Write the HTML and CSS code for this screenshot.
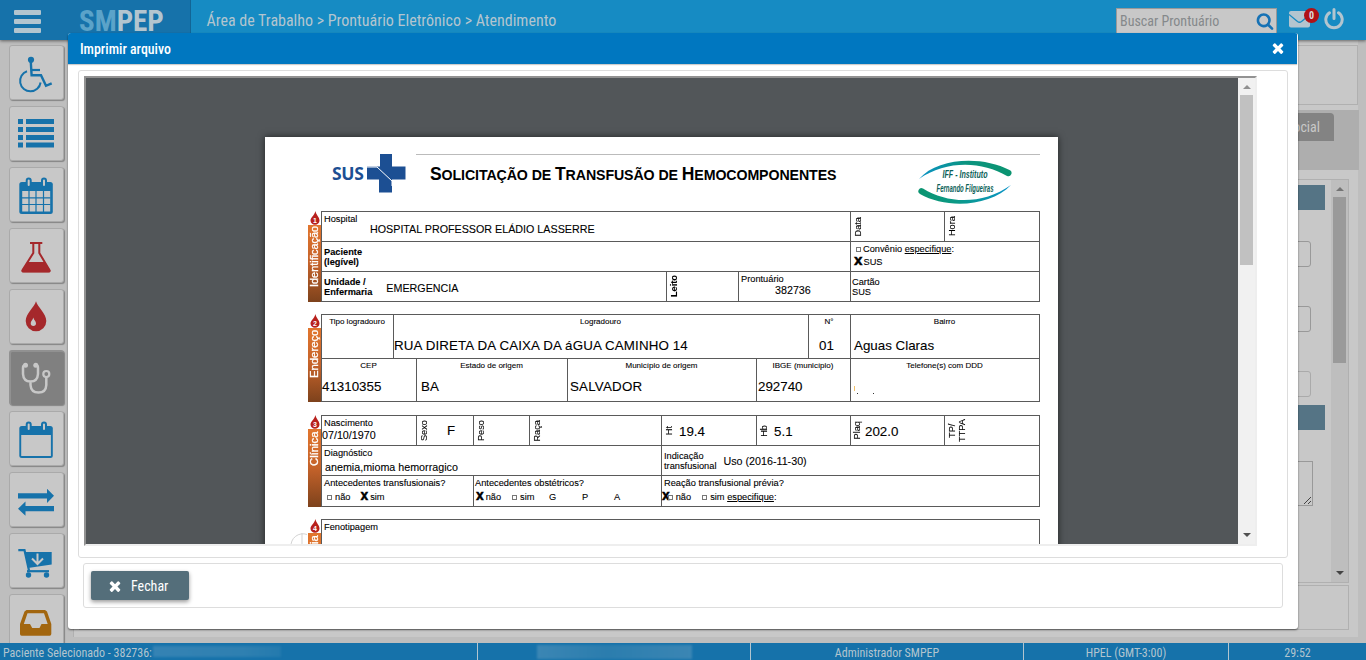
FILE: index.html
```html
<!DOCTYPE html>
<html lang="pt-BR">
<head>
<meta charset="utf-8">
<title>SMPEP - Atendimento</title>
<link rel="stylesheet" href="styles.css">
</head>
<body>
<header class="topbar">
  <div class="brand">
    <div class="burger"><i></i><i></i><i></i></div>
    <div class="logo"><span>SM</span>PEP</div>
  </div>
  <div class="crumbs">Área de Trabalho &gt; Prontuário Eletrônico &gt; Atendimento</div>
  <div class="tools">
    <div class="search"><span>Buscar Prontuário</span>
      <svg width="18" height="18" viewBox="0 0 1792 1792"><path fill="#1672b5" d="M1216 832q0-185-131.500-316.500t-316.500-131.500-316.500 131.500-131.500 316.500 131.500 316.500 316.500 131.500 316.500-131.500 131.500-316.500zm512 832q0 52-38 90t-90 38q-54 0-90-38l-343-342q-179 124-399 124-143 0-273.500-55.500t-225-150-150-225-55.500-273.500 55.500-273.500 150-225 225-150 273.500-55.500 273.500 55.500 225 150 150 225 55.500 273.500q0 220-124 399l343 343q37 37 37 90z"/></svg>
    </div>
    <div class="mail">
      <svg width="22" height="18" viewBox="0 0 22 18"><rect y="1" width="21" height="16.500" rx="2" fill="#b3c5cf"/><path d="M0 4.500L8.500 11.500Q10.500 13 12.500 11.500L21 4.500" fill="none" stroke="#168bc3" stroke-width="1.300"/></svg>
      <b>0</b>
    </div>
    <svg class="power" width="20" height="22" viewBox="0 0 20 22"><path d="M5.500 4.800A8.200 8.200 0 1 0 14.500 4.800M10 1.500V10.500" fill="none" stroke="#b3c5cf" stroke-width="3" stroke-linecap="round"/></svg>
  </div>
</header>

<main class="workspace">
  <nav class="side">
    <div class="tile"><svg viewBox="0 0 54 54"><circle cx="21" cy="14.800" r="3.100" fill="#1672aa"/><g fill="none" stroke="#1672aa"><path d="M20.800 17L21.600 30.200H31L36 40.800 41.700 38.300" stroke-width="2.400"/><path d="M21 25H30" stroke-width="2.200"/><path d="M17 26.300A10.300 10.300 0 1 0 30.600 37.500" stroke-width="2"/></g></svg></div>
    <div class="tile"><svg viewBox="0 0 54 54" fill="#1672aa"><path d="M8 13h5v5H8zM16 13h28v5H16zM8 21h5v5H8zM16 21h28v5H16zM8 29h5v5H8zM16 29h28v5H16zM8 36.500h5v5H8zM16 36.500h28v5H16z"/></svg></div>
    <div class="tile"><svg viewBox="0 0 54 54"><rect x="9.300" y="15" width="33.500" height="32" rx="2.500" fill="#1672aa"/><path d="M12.200 24h28v20.500h-28z" fill="#c8c8c8"/><path d="M19 24v21M26 24v21M33.500 24v21M12 30.800h28.500M12 37.500h28.500" stroke="#1672aa" stroke-width="1.200"/><g fill="#c8c8c8" stroke="#1672aa" stroke-width="2"><rect x="16.700" y="11.500" width="4" height="8.500" rx="2"/><rect x="32" y="11.500" width="4" height="8.500" rx="2"/></g></svg></div>
    <div class="tile"><svg viewBox="0 0 54 54"><path d="M20 15H32.300M23.300 15V25L12.600 42Q12 43.500 13.500 43.500H38.500Q40 43.500 39.400 42L29.300 25V15" fill="none" stroke="#a5282b" stroke-width="2"/><path d="M18 34H34.500L40.500 42.500Q40.800 44.300 38.500 44.300H13.500Q11.300 44.300 11.500 42.500Z" fill="#a5282b"/></svg></div>
    <div class="tile"><svg viewBox="0 0 54 54"><path d="M26 12.300C27.500 18 36.300 24.500 36.300 32A10.300 10.300 0 0 1 15.700 32C15.700 24.500 24.500 18 26 12.300Z" fill="#a5282b"/><path d="M23.300 28.500C23.800 31 26 32 26 34.300A2.600 2.600 0 0 1 20.700 34.300C20.700 32 22.800 31 23.300 28.500Z" fill="#c8c8c8"/></svg></div>
    <div class="tile active"><svg viewBox="0 0 54 54"><g fill="none" stroke="#c8c8c8" stroke-width="2.500"><path d="M15 15.500Q13 15 13 18V24Q13.500 31.500 20.500 31.500T28 24V18Q28 15 26 15.500M20.500 31.500V35Q21 42.500 28.500 42.500T36.300 35V27"/><circle cx="36.300" cy="24" r="3" stroke-width="2.200"/></g><g fill="#c8c8c8"><circle cx="15.500" cy="15.300" r="2.500"/><circle cx="25.800" cy="15.300" r="2.500"/></g></svg></div>
    <div class="tile"><svg viewBox="0 0 54 54"><rect x="9.300" y="15" width="33.500" height="32" rx="2.500" fill="#1672aa"/><path d="M11.200 24h29.700v21h-29.700z" fill="#c8c8c8"/><g fill="#c8c8c8" stroke="#1672aa" stroke-width="2"><rect x="16.700" y="11.500" width="4" height="8.500" rx="2"/><rect x="32" y="11.500" width="4" height="8.500" rx="2"/></g></svg></div>
    <div class="tile"><svg viewBox="0 0 54 54" fill="#1672aa"><path d="M8 21.300H37V16.800L44 23.800 37 31V26.500H8zM44 34.100H15.500V29.600L8 36.700 15.500 43.800V39.300H44z"/></svg></div>
    <div class="tile"><svg viewBox="0 0 54 54"><path d="M8.300 17.200H14.500L19 37.500" fill="none" stroke="#1672aa" stroke-width="2.200"/><path d="M15.500 19H41.700V31.500L18 35Z" fill="#1672aa"/><path d="M17 38.200H39" stroke="#1672aa" stroke-width="2.200"/><circle cx="18.500" cy="42" r="2.700" fill="#1672aa"/><circle cx="36.500" cy="42" r="2.700" fill="#1672aa"/><path d="M27.500 20.500V30M22 25.500L27.500 31 33 25.500" fill="none" stroke="#c8c8c8" stroke-width="2"/></svg></div>
    <div class="tile"><svg viewBox="0 0 54 54"><path fill-rule="evenodd" fill="#a2660f" d="M16.500 16H35L37 17.500 41.300 30V40Q41.300 41.700 39.600 41.700H11.700Q10 41.700 10 40V30L14.500 17.500ZM17.500 19.300L13.800 30H20L22.200 34H29.500L31.500 30H37.700L34 19.300Z"/></svg></div>
  </nav>
  <section class="record">
    <div class="patient"></div>
    <div class="tabs"><div class="tab">Social</div></div>
    <div class="formarea">
      <div class="fields">
        <div class="band"></div>
        <div class="field f1"></div>
        <div class="field f2"></div>
        <div class="field f3"></div>
        <div class="band b2"></div>
        <div class="area"><svg width="10" height="10" viewBox="0 0 10 10"><path d="M2 9L9 2M6 9L9 6" stroke="#444" stroke-width="1"/></svg></div>
      </div>
      <div class="scroll dim"><i class="up"></i><div class="thumb"></div><i class="down"></i></div>
    </div>
    <div class="actions"></div>
  </section>
</main>

<footer class="status">
  <div class="s1">Paciente Selecionado - 382736:<i class="smudge"></i></div>
  <div class="s2"><i class="smudge"></i></div>
  <div class="s3">Administrador SMPEP</div>
  <div class="s4">HPEL (GMT-3:00)</div>
  <div class="s5">29:52</div>
</footer>

<div class="modal">
  <div class="modal-head"><span>Imprimir arquivo</span>
    <svg width="16" height="16" viewBox="0 0 1792 1792"><path fill="#fff" d="M1490 1322q0 40-28 68l-136 136q-28 28-68 28t-68-28l-294-294-294 294q-28 28-68 28t-68-28l-136-136q-28-28-28-68t28-68l294-294-294-294q-28-28-28-68t28-68l136-136q28-28 68-28t68 28l294 294 294-294q28-28 68-28t68 28l136 136q28 28 28 68t-28 68l-294 294 294 294q28 28 28 68z"/></svg>
  </div>
  <div class="modal-body">
    <div class="viewer">
      <div class="canvas">
        <article class="sheet">
          <div class="sheet-head">
            <div class="sus"><span>SUS</span>
              <svg width="39" height="39" viewBox="0 0 39 39"><path fill="#1c4f93" d="M13 0H25V12.500H38.500V25.500H25V38.500H12V25.500H0V12.500H13Z"/><path d="M0 13H10L25 27V32" fill="none" stroke="#fff" stroke-width="1"/></svg>
            </div>
            <h1><b>S</b>olicitação de <b>T</b>ransfusão de <b>H</b>emocomponentes</h1>
            <svg class="iff" width="94" height="44" viewBox="0 0 94 44">
              <defs><linearGradient id="a"><stop offset="0" stop-color="#0a93c8"/><stop offset=".5" stop-color="#0b9480"/><stop offset="1" stop-color="#0b9470"/></linearGradient><linearGradient id="b"><stop offset="0" stop-color="#0b9470"/><stop offset=".4" stop-color="#0b9a86"/><stop offset="1" stop-color="#0a93c8"/></linearGradient></defs>
              <path fill="url(#a)" d="M1 19C20-3 65-4 91.500 10A3 3 0 0 1 89 16C64 1 28 0 1 19Z"/>
              <path fill="url(#b)" d="M93 25C72 47 28 49 2 34A3 3 0 0 1 5 28.500C30 44 65 45 93 25Z"/>
              <g class="script" fill="#0b5f58" text-anchor="middle"><text x="47" y="18" textLength="45" lengthAdjust="spacingAndGlyphs">IFF - Instituto</text><text x="47" y="32" textLength="57" lengthAdjust="spacingAndGlyphs">Fernando Filgueiras</text></g>
            </svg>
          </div>

          <div class="block">
            <div class="strip"><svg viewBox="0 0 10 14"><path d="M5.500 0C6 4 9.500 6 9.500 9.500A4.500 4.300 0 0 1 .5 9.500C.5 6.500 4 5 5.500 0Z" fill="#b8201c"/><text x="5" y="11.800">1</text></svg><span>Identificação</span></div>
            <div class="grid">
              <div class="row r30 g1">
                <div class="cell"><label>Hospital</label><p class="v hosp">HOSPITAL PROFESSOR ELÁDIO LASSERRE</p></div>
                <div class="cell rot"><label>Data</label></div>
                <div class="cell rot"><label>Hora</label></div>
              </div>
              <div class="row r30 g2">
                <div class="cell bold"><label>Paciente<br>(legível)</label></div>
                <div class="cell conv"><label><i class="box"></i>Convênio <u>especifique</u>:</label><label><b class="x big">X</b>SUS</label></div>
              </div>
              <div class="row r30 g3">
                <div class="cell bold line"><label>Unidade /<br>Enfermaria</label><p class="v">EMERGENCIA</p></div>
                <div class="cell rot bold"><label>Leito</label></div>
                <div class="cell"><label>Prontuário</label><p class="v pront">382736</p></div>
                <div class="cell card"><label>Cartão<br>SUS</label></div>
              </div>
            </div>
          </div>

          <div class="block two">
            <div class="strip"><svg viewBox="0 0 10 14"><path d="M5.500 0C6 4 9.500 6 9.500 9.500A4.500 4.300 0 0 1 .5 9.500C.5 6.500 4 5 5.500 0Z" fill="#b8201c"/><text x="5" y="11.800">2</text></svg><span>Endereço</span></div>
            <div class="grid">
              <div class="row r44 g4 mid">
                <div class="cell"><label>Tipo logradouro</label></div>
                <div class="cell"><label>Logradouro</label><p class="w p0">RUA DIRETA DA CAIXA DA áGUA CAMINHO 14</p></div>
                <div class="cell"><label>N°</label><p class="w p11">01</p></div>
                <div class="cell"><label>Bairro</label><p class="w p3">Aguas Claras</p></div>
              </div>
              <div class="row r43 g5 mid">
                <div class="cell"><label>CEP</label><p class="w pn">41310355</p></div>
                <div class="cell"><label>Estado de origem</label><p class="w p4">BA</p></div>
                <div class="cell"><label>Município de origem</label><p class="w p2">SALVADOR</p></div>
                <div class="cell"><label>IBGE (município)</label><p class="w p1">292740</p></div>
                <div class="cell"><label>Telefone(s) com DDD</label><div class="specks"><i></i><i></i><i></i></div></div>
              </div>
            </div>
          </div>

          <div class="block three">
            <div class="strip"><svg viewBox="0 0 10 14"><path d="M5.500 0C6 4 9.500 6 9.500 9.500A4.500 4.300 0 0 1 .5 9.500C.5 6.500 4 5 5.500 0Z" fill="#b8201c"/><text x="5" y="11.800">3</text></svg><span>Clínica</span></div>
            <div class="grid">
              <div class="row r30 g6">
                <div class="cell"><label>Nascimento</label><p class="v born">07/10/1970</p></div>
                <div class="cell rot"><label>Sexo</label><p class="w sex">F</p></div>
                <div class="cell rot"><label>Peso</label></div>
                <div class="cell rot"><label>Raça</label></div>
                <div class="cell rot"><label>Ht</label><p class="w">19.4</p></div>
                <div class="cell rot"><label>Hb</label><p class="w">5.1</p></div>
                <div class="cell rot plaq"><label>Plaq</label><p class="w">202.0</p></div>
                <div class="cell rot tp"><label>TP/<br>TTPA</label></div>
              </div>
              <div class="row r30 g7">
                <div class="cell"><label>Diagnóstico</label><p class="v diag">anemia,mioma hemorragico</p></div>
                <div class="cell ind"><label>Indicação<br>transfusional</label><p class="v">Uso (2016-11-30)</p></div>
              </div>
              <div class="row r31 g8">
                <div class="cell"><label>Antecedentes transfusionais?</label><div class="opts o1"><span><i class="box"></i>não</span><span><b class="x">X</b>sim</span></div></div>
                <div class="cell"><label>Antecedentes obstétricos?</label><div class="opts o2"><span><b class="x">X</b>não</span><span><i class="box"></i>sim</span><span>G</span><span>P</span><span>A</span></div></div>
                <div class="cell"><label>Reação transfusional prévia?</label><div class="opts o3"><span><b class="x">X</b><i class="box"></i>não</span><span><i class="box"></i>sim <u>especifique</u>:</span></div></div>
              </div>
            </div>
          </div>

          <div class="block four">
            <svg class="mark" width="17" height="30" viewBox="0 0 17 30"><path d="M17 1.500A12 12 0 0 0 1 14M12 0V14M0 12H17" fill="none" stroke="#d3d3d3"/></svg>
            <div class="strip"><svg viewBox="0 0 10 14"><path d="M5.500 0C6 4 9.500 6 9.500 9.500A4.500 4.300 0 0 1 .5 9.500C.5 6.500 4 5 5.500 0Z" fill="#b8201c"/><text x="5" y="11.800">4</text></svg><span>Hemoterapia</span></div>
            <div class="grid"><div class="row g9"><div class="cell"><label>Fenotipagem</label></div></div></div>
          </div>
        </article>
      </div>
      <div class="scroll"><i class="up"></i><div class="thumb"></div><i class="down"></i></div>
    </div>
  </div>
  <div class="modal-foot">
    <button class="close"><svg width="16" height="16" viewBox="0 0 1792 1792"><path fill="#fff" d="M1490 1322q0 40-28 68l-136 136q-28 28-68 28t-68-28l-294-294-294 294q-28 28-68 28t-68-28l-136-136q-28-28-28-68t28-68l294-294-294-294q-28-28-28-68t28-68l136-136q28-28 68-28t68 28l294 294 294-294q28-28 68-28t68 28l136 136q28 28 28 68t-28 68l-294 294 294 294q28 28 28 68z"/></svg><span>Fechar</span></button>
  </div>
</div>
</body>
</html>
```
FILE: styles.css
```css
* { box-sizing: border-box; }
body { margin: 0; width: 1366px; height: 660px; overflow: hidden; position: relative; display: flex; flex-direction: column; background: #bebebe; font-family: "Roboto Condensed", Roboto, sans-serif; font-stretch: 75%; }
p, h1 { margin: 0; }
svg { display: block; flex: none; }

.topbar { height: 40px; flex: none; display: flex; background: #168bc3; box-shadow: 0 1px 3px rgba(0,0,0,.5); color: #b3c5cf; z-index: 1; }
.brand { width: 191px; display: flex; background: #1672aa; border-right: 1px solid #126595; }
.burger { width: 27px; margin: 10px 39px 0 14px; display: flex; flex-direction: column; gap: 4px; }
.burger i { height: 5px; border-radius: 1px; background: #b3c5cf; }
.logo { font-size: 29px; line-height: 43px; font-weight: 700; margin-left: -1px; }
.logo span { color: #5ba3c9; }
.crumbs { margin-left: 15.5px; flex: 1; font-size: 16px; line-height: 41px; }
.tools { display: flex; padding-top: 8px; width: 250px; }
.search { width: 161px; height: 27px; display: flex; justify-content: space-between; padding: 3px 2px 0 3px; background: #c8c8c8; border: 1px solid #999; color: #85898b; font-size: 14px; line-height: 18px; }
.mail { position: relative; margin: 2px 0 0 12px; width: 32px; }
.mail b { position: absolute; left: 15px; top: -2px; width: 15px; height: 15px; border-radius: 50%; background: #b01116; color: #ddd; font-size: 10px; line-height: 15px; text-align: center; }
.power { margin-left: 3px; }

.workspace { flex: 1; min-height: 0; display: flex; }
.side { width: 73px; padding: 5px 0 0 9px; display: flex; flex-direction: column; gap: 6px; overflow: hidden; }
.tile { width: 55px; height: 55px; flex: none; border: 1px solid #aaa; border-radius: 3px; background: #c8c8c8; box-shadow: 1px 1px 1px rgba(0,0,0,.3); }
.tile svg { width: 54px; height: 54px; margin: -1px 0 0; }
.tile.active { background: #808080; border: 2px solid #919191; border-width: 2px 0 0 2px; }
.tile.active svg { margin: -2px 0 0 -1px; }

.record { width: 1285px; height: 597px; background: #c8c8c8; border-left: 1px solid #b0b0b0; }
.patient { margin-top: 5px; height: 60px; border: 1px solid #b0b0b0; }
.tabs { margin-top: 5px; margin-right: -1px; height: 60px; background: #aeaeae; padding: 3px 25px 0 0; display: flex; justify-content: flex-end; }
.tab { width: 60px; height: 28px; border-radius: 0 4px 0 0; background: #838383; color: #c8c8c8; font-size: 14px; line-height: 28px; text-align: right; padding-right: 14px; }
.formarea { margin: 9px 9px 0 5px; height: 404px; border: 1px solid #b0b0b0; display: flex; justify-content: flex-end; }
.fields { width: 1235px; display: flex; flex-direction: column; padding-top: 5px; }
.band { height: 25px; width: 1229px; background: #557485; flex: none; }
.field { width: 1215px; height: 26px; border: 1px solid #999; border-radius: 3px; margin-top: 39px; flex: none; }
.field.f1 { margin-top: 31px; }
.field.f3 { border-color: #aaa; }
.b2 { margin-top: 8px; }
.area { width: 1217px; height: 45px; margin-top: 31px; border: 1px solid #999; display: flex; justify-content: flex-end; align-items: flex-end; }
.actions { height: 45px; margin: 2px 9px 0 5px; border: 1px solid #b0b0b0; }

.scroll { width: 17px; flex: none; background: #f1f1f1; display: flex; flex-direction: column; align-items: center; padding: 7px 0; }
.scroll .up { border: 4px solid transparent; border-top: 0; border-bottom-color: #909090; }
.scroll .thumb { width: 13px; height: 170px; background: #c1c1c1; margin: 6px 0 auto; }
.scroll .down { border: 4px solid transparent; border-bottom: 0; border-top-color: #505050; }
.scroll.dim { background: #bebebe; padding-bottom: 7px; }
.dim .up { border-bottom-color: #747474; }
.dim .thumb { background: #9a9a9a; height: 166px; }
.dim .down { border-top-color: #444; }

.status { height: 17px; flex: none; z-index: 1; display: flex; background: #1672aa; color: #b3c5cf; font-size: 12px; line-height: 20px; text-align: center; }
.status div { border-left: 1px solid #b3c5cf; height: 17px; display: flex; justify-content: center; }
.status .s1 { width: 477px; border: 0; justify-content: flex-start; padding-left: 3px; }
.s2 { width: 273px; } .s3 { width: 273px; } .s4 { width: 205px; } .s5 { width: 138px; }
.smudge { width: 128px; height: 11px; margin: 3px 0 0 1px; background: linear-gradient(90deg, #3583b4, #2f80b1 70%, #247aae); filter: blur(1px); }
.s2 .smudge { width: 155px; margin-top: 2px; height: 14px; background: linear-gradient(90deg, #3b86b4, #2b7dae 45%, #3b86b4); }

.modal { position: absolute; z-index: 3; left: 68px; top: 33px; width: 1230px; height: 596px; background: #fff; border-radius: 3px; box-shadow: 0 1px 2px rgba(0,0,0,.55); overflow: hidden; }
.modal-head { height: 31px; width: 1229px; background: #0077c0; display: flex; justify-content: space-between; align-items: center; color: #fff; font-size: 13.9px; font-weight: 500; padding: 0 11px 0 12px; box-shadow: 0 1px 1px #ccc; }
.modal-head svg { margin-top: -2px; }
.modal-body { margin: 6px 0 0 10px; width: 1210px; height: 488px; border: 1px solid #ddd; border-radius: 3px; padding: 5px; }
.viewer { width: 1173px; height: 470px; border: 2px solid; border-color: #929292 #eee #eee #929292; display: flex; }
.canvas { flex: 1; height: 466px; background: #525659; overflow: hidden; }
.modal-foot { margin: 5px 0 0 15px; width: 1200px; height: 45px; border: 1px solid #ddd; border-radius: 3px; padding: 7px; }
.close { width: 98px; height: 29px; border: 0; border-radius: 2px; background: #546e7a; box-shadow: 0 2px 4px rgba(0,0,0,.4); color: #fff; font: inherit; font-size: 14px; display: flex; align-items: center; padding: 0 0 0 16px; gap: 8px; }

.sheet { margin: 59px 0 0 179px; width: 793px; height: 900px; background: #fff; box-shadow: 0 0 7px rgba(0,0,0,.6); font-family: "Liberation Sans", Arial, sans-serif; font-stretch: normal; color: #000; padding: 16px 0 0 43px; }
.sheet-head { height: 58px; display: flex; position: relative; }
.sheet-head::before { content: ""; position: absolute; left: 108px; top: 1px; width: 624px; height: 1px; background: #bbb; }
.sus { display: flex; width: 122px; padding: 1px 0 0 24px; color: #1c4f93; }
.sus span { width: 34.5px; font: 700 17.5px/39px "Open Sans", "Noto Sans", sans-serif; letter-spacing: -.3px; }
h1 { width: 488px; font-size: 14.200px; line-height: 42px; letter-spacing: -.1px; text-transform: uppercase; white-space: nowrap; }
h1 b { font-size: 17.500px; }
.iff { margin-top: 7px; }
.script { font: italic bold 10px "Liberation Sans", sans-serif; }

.block { display: flex; height: 91px; position: relative; }
.block.two { margin-top: 12px; height: 88px; }
.block.three { margin-top: 13px; height: 92px; }
.block.four { margin-top: 12px; height: 140px; }
.mark { position: absolute; left: -18px; top: 14px; }
.strip { width: 13px; display: flex; flex-direction: column; align-items: center; }
.strip svg { width: 10px; height: 14px; margin-left: 1px; }
.strip text { font-size: 7px; font-weight: 700; fill: #fff; text-anchor: middle; }
.strip span { flex: 1; width: 13px; writing-mode: vertical-rl; transform: rotate(180deg); text-align: right; background: linear-gradient(0deg, #e2762e, #c4622a 50%, #7d421c); color: #fff; font-size: 11.300px; line-height: 12px; -webkit-text-stroke: .3px #fff; white-space: nowrap; overflow: hidden; padding-bottom: 2px; padding-left: 1px; }
.block:not(.two):not(.three):not(.four) .strip span { font-size: 10.9px; padding-bottom: 1px; }
.grid { width: 719px; border: solid #5a5a5a; border-width: 0 1px 1px 0; }
.row { display: grid; }
.r30 { height: 30px; } .r31 { height: 31px; } .r44 { height: 44px; } .r43 { height: 43px; }
.g1 { grid-template-columns: 529px 94px 95px; }
.g2 { grid-template-columns: 529px 189px; }
.g3 { grid-template-columns: 345px 72px 112px 189px; }
.g4 { grid-template-columns: 72px 415px 42px 189px; }
.g5 { grid-template-columns: 95px 151px 189px 94px 189px; }
.g6 { grid-template-columns: 95px 57px 56px 132px 95px 94px 94px 95px; }
.g7 { grid-template-columns: 340px 378px; }
.g8 { grid-template-columns: 152px 188px 378px; }
.g9 { grid-template-columns: 718px; height: 139px; }
.cell { border: solid #5a5a5a; border-width: 1px 0 0 1px; padding: 2px 0 0 2px; font-size: 9.250px; line-height: 10px; min-width: 0; white-space: nowrap; -webkit-text-stroke: .1px #000; }
.cell label { display: block; }
.bold label { font-weight: 700; }
.bold { padding-top: 5px; }
.v { font-size: 10.730px; line-height: 12px; }
.w { font-size: 13.350px; line-height: 16px; }
.hosp { margin: -1px 0 0 46px; }
.line { display: flex; gap: 14px; } .line .v { margin-top: 5px; }
.pront { margin: 0 0 0 34px; }
.card { padding: 5px 0 0 1px; }
.rot { display: flex; align-items: center; padding: 0 0 0 2px; gap: 6px; }
.rot label { writing-mode: vertical-rl; transform: rotate(180deg); text-align: center; }
.rot .w { padding-top: 2px; margin-left: -1px; }
.rot .sex { margin-left: 12px; margin-top: -1px; }
.plaq { gap: 4px; }
.plaq label { margin-left: -1px; }
.box { display: inline-block; width: 5px; height: 5px; border: 1px solid #777; margin: 0 3px 0 0; }
.conv { padding-left: 4px; }
.conv label { height: 13px; }
.conv .box { margin-left: 1px; margin-right: 2px; }
.x { font-family: "DejaVu Sans", sans-serif; font-size: 10px; line-height: 8px; margin-right: 2px; -webkit-text-stroke: .5px #000; }
.x.big { font-size: 11px; margin-right: 1px; margin-left: -1px; }
.mid label { font-size: 8px; text-align: center; height: 21px; margin-left: -3px; }
.r43 label { height: 18px; }
.p0 { margin-left: -2px; letter-spacing: .13px; } .p11 { margin-left: 8px; } .p3 { margin-left: 1px; } .pn { margin-left: -2px; } .p4 { margin-left: 2px; } .p2 { margin-left: 0; letter-spacing: .2px; } .p1 { margin-left: -1px; }
.specks { display: flex; padding-left: 1px; gap: 15px; align-items: flex-end; height: 15px; }
.specks i { width: 1px; height: 1px; background: #333; }
.specks i:first-child { height: 5px; background: #f2c26b; margin: 0 -13px 3px 0; }
.born { margin: 1px 0 0 -2px; }
.diag { margin: 3px 0 0 1px; }
.ind { display: flex; gap: 7px; padding-top: 5px; } .ind .v { margin-top: 4px; }
.opts { display: flex; margin-top: 4px; }
.o1 { padding-left: 3px; gap: 10px; }
.o2 { padding-left: 1px; } .o2 span:nth-child(1) { width: 36px; } .o2 span:nth-child(2) { width: 37px; } .o2 span:nth-child(3) { width: 33px; } .o2 span:nth-child(4) { width: 32px; }
.g8 .cell:nth-child(2) { padding-left: 1px; }
.o3 { margin-left: -2px; gap: 11px; } .o3 .x { margin-right: -2px; }
```
